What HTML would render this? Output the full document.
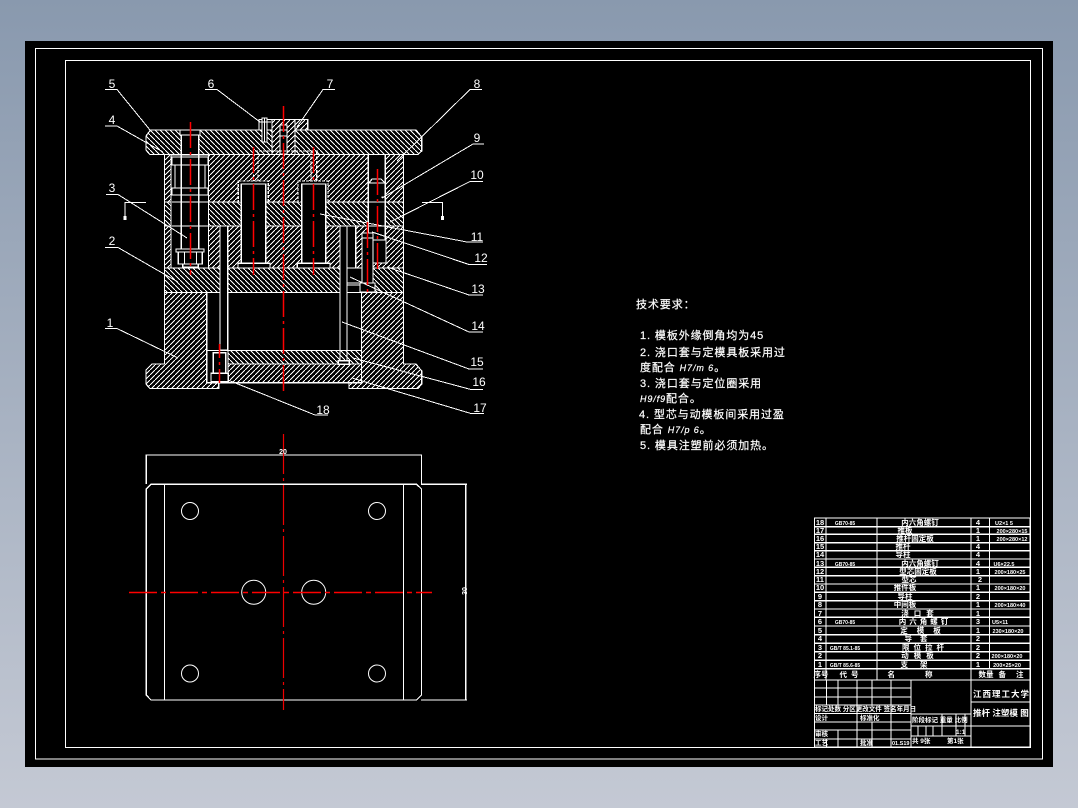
<!DOCTYPE html>
<html><head><meta charset="utf-8"><style>
html,body{margin:0;padding:0;width:1078px;height:808px;overflow:hidden;background:linear-gradient(#8999ae,#c4c9d4)}
svg{position:absolute;left:0;top:0}
.w{fill:none;stroke:#fff;stroke-width:1.2}
.k{fill:#000;stroke:#fff;stroke-width:1.2}
.l{fill:none;stroke:#fff;stroke-width:1}
.r{fill:none;stroke:#f00;stroke-width:1.5;stroke-dasharray:26 4 3 4}
text{fill:#fff;font-family:"Liberation Sans","Noto Sans CJK SC",sans-serif}
.n{font-size:12px;text-anchor:middle}
.t{font-size:11px;letter-spacing:.9px;stroke:#fff;stroke-width:.2px}
.s{font-size:7.5px;font-weight:bold;text-anchor:middle}
.b{font-size:7.5px;font-weight:bold}
</style></head><body>
<svg width="1078" height="808" viewBox="0 0 1078 808" xmlns="http://www.w3.org/2000/svg">
<defs>
<pattern id="a" patternUnits="userSpaceOnUse" width="5" height="5"><path d="M-1 6L6-1" stroke="#fff" stroke-width="1" shape-rendering="crispEdges"/></pattern>
<pattern id="b" patternUnits="userSpaceOnUse" width="5" height="5"><path d="M-1-1L6 6" stroke="#fff" stroke-width="1" shape-rendering="crispEdges"/></pattern>
</defs>
<rect x="25" y="41" width="1028" height="726" fill="#000"/>
<rect x="35.5" y="48.5" width="1007" height="710.5" fill="none" stroke="#fff" stroke-width="1.2" shape-rendering="crispEdges"/>
<rect x="65.5" y="60.5" width="965" height="687" fill="none" stroke="#fff" stroke-width="1.2" shape-rendering="crispEdges"/>

<g shape-rendering="crispEdges">
<path d="M259 130V119.5H307.7V130" fill="url(#a)" stroke="#fff" stroke-width="1.2"/>
<rect x="259" y="119.5" width="13" height="11" fill="#000"/>
<path d="M259 119.5H272M259 119.5V130" class="w"/>
<path d="M150.5 130H416L421.7 137V151L418 154.5H150L146 150V136Z" fill="#000"/>
<path d="M150.5 130H416L421.7 137V151L418 154.5H150L146 150V136Z" class="w" style="fill:url(#b)"/>
<rect x="272" y="119.5" width="23" height="35" fill="#000"/>
<rect x="272" y="119.5" width="23" height="35" fill="url(#a)" stroke="#fff" stroke-width="1.2"/>
<rect x="280" y="125" width="7" height="29" class="k"/>
<path d="M280 130H287M280 136H287" class="l"/>
<rect x="180" y="130" width="20" height="5" class="k"/>
<rect x="181.3" y="135" width="17.4" height="20" class="k"/>
<path d="M262 118H267V142H262Z" fill="#000" stroke="#fff"/>
<path d="M259 122H271M264.5 118V142" class="l"/>

<rect x="164.5" y="154.5" width="239" height="47.5" class="w" style="fill:url(#a)"/>
<rect x="164.5" y="202" width="239" height="24" class="w" style="fill:url(#b)"/>
<rect x="164.5" y="226" width="239" height="42" class="w" style="fill:url(#a)"/>
<rect x="164.5" y="268" width="239" height="24.5" class="w" style="fill:url(#b)"/>

<rect x="171" y="155" width="37.5" height="113" class="k"/>
<path d="M172 202H208M172 226H208" class="w"/>
<rect x="172" y="157" width="36" height="8" class="k"/>
<rect x="172" y="188" width="36" height="7" class="k"/>
<rect x="175" y="165" width="30" height="23" class="k"/>
<path d="M181.3 155V249M198.7 155V249" class="w"/>
<rect x="176" y="249" width="28" height="3" class="k"/>
<rect x="178.3" y="252" width="24" height="12" class="k"/>
<path d="M184.3 252V264M196.7 252V264" class="l"/>
<rect x="182.7" y="264" width="15.6" height="3" class="k"/>

<path d="M255 151H318" class="w" stroke-dasharray="3 1"/>
<path d="M253.5 152V181M258 152V181M311 152V181M316.7 152V181" class="w" stroke-dasharray="3 1.5"/>

<rect x="238.3" y="181" width="30" height="21" class="k" stroke-dasharray="3 1"/>
<rect x="298" y="181" width="30" height="21" class="k" stroke-dasharray="3 1"/>
<rect x="241.3" y="184" width="24.4" height="84" class="k"/>
<rect x="301.7" y="184" width="24" height="84" class="k"/>
<rect x="238" y="263.3" width="32" height="4.7" class="k"/>
<rect x="297.3" y="263.3" width="32.7" height="4.7" class="k"/>

<rect x="368.3" y="154.5" width="17" height="107" class="k"/>
<path d="M369 183L372 179H381L385 183H369Z" class="k"/>
<path d="M368.3 202H385.3M368.3 226H385.3" class="l"/>
<path d="M382 198V197H386" class="l"/>

<rect x="220" y="226" width="7.7" height="124" class="k"/>
<rect x="340" y="226" width="7" height="134.7" class="k"/>
<rect x="347" y="226" width="8.7" height="42" class="k"/>
<rect x="347" y="268" width="15" height="24.5" class="k"/>
<path d="M347 283H362M347 285H362" class="l"/>
<rect x="362" y="233" width="11" height="50" class="k"/>
<path d="M362 238H373" class="l"/>
<rect x="373" y="240" width="13" height="23" class="k"/>
<path d="M373 263H388" class="w"/>
<rect x="360" y="283" width="15" height="9" class="k" stroke-width="2"/>

<rect x="206.7" y="350.5" width="154.8" height="13.5" class="w" style="fill:url(#b)"/>
<rect x="206.7" y="364" width="154.8" height="18.7" class="w" style="fill:url(#a)"/>

<path d="M164.5 292.5H206.7V382.7H218.7V388.5H150L146 384V370L152 364H164.5Z" class="w" style="fill:url(#a)"/>
<path d="M361.5 292.5H403.5V364H416L421.7 371V384L418 388.5H349V382.7H361.5Z" class="w" style="fill:url(#a)"/>

<path d="M220 292.5V350M227.7 292.5V350M340 292.5V361M347 292.5V361" class="w"/>
<rect x="338.3" y="360.7" width="11" height="3.6" class="k"/>
<rect x="206.7" y="350.5" width="21.3" height="32.2" class="k"/>
<rect x="213.3" y="352.7" width="12.4" height="20.6" class="k"/>
<rect x="211" y="373.3" width="17.3" height="8.4" class="k"/>
</g>

<g class="l" shape-rendering="crispEdges">
<path d="M105 89.5H117L150 130"/>
<path d="M105 126H117L163 152"/>
<path d="M205 89.5H217L260 122"/>
<path d="M106 194.5H118L187 238"/>
<path d="M105 247.5H118L178 282"/>
<path d="M105 328.5H117L178 358"/>
<path d="M335 89.5H323L297 127"/>
<path d="M482 89.5H470L397 161"/>
<path d="M484 144H473L382 198"/>
<path d="M483 181.5H470L390 222"/>
<path d="M483 242H467L320 214"/>
<path d="M487 264.5H469L372 232"/>
<path d="M483 295H469L387 267"/>
<path d="M483 332H469L350 277"/>
<path d="M483 369H469L342 322"/>
<path d="M483 389.5H471L353 358"/>
<path d="M484 413.5H471L352 378"/>
<path d="M328 415H315L228 380"/>
<path d="M146 202.5H125V220"/>
<path d="M422 202.5H442.5V220"/>
</g>
<rect x="123.5" y="216" width="3" height="4" fill="#fff"/>
<rect x="441" y="216" width="3" height="4" fill="#fff"/>

<g class="r">
<path d="M190.5 122V275"/>
<path d="M253.5 147V275"/>
<path d="M283.5 106V395"/>
<path d="M313.5 147V275"/>
<path d="M367.5 222V292"/>
<path d="M377.5 169V273"/>
<path d="M219.5 344V385" stroke-dasharray="14 4 3 4"/>
</g>

<g>
<text class="n" x="112" y="88">5</text><text class="n" x="112" y="124">4</text><text class="n" x="211" y="88">6</text>
<text class="n" x="112" y="192">3</text><text class="n" x="112" y="245">2</text><text class="n" x="110" y="327">1</text>
<text class="n" x="330" y="88">7</text><text class="n" x="477" y="88">8</text><text class="n" x="477" y="142">9</text>
<text class="n" x="477" y="179">10</text><text class="n" x="477" y="241">11</text><text class="n" x="481" y="262">12</text>
<text class="n" x="478" y="293">13</text><text class="n" x="478" y="330">14</text><text class="n" x="477" y="366">15</text>
<text class="n" x="479" y="386">16</text><text class="n" x="480" y="412">17</text><text class="n" x="323" y="414">18</text>
</g>

<g shape-rendering="crispEdges" class="w">
<path d="M151 484.3H416.5L421.5 489V695L416.5 700H151L146.3 695V489Z"/>
<path d="M164.5 484.3V700M403.5 484.3V700"/>
<path d="M146.3 484V455H421.5V484M421 484.3H467M421 700H467M465.7 484.3V700"/>
</g>
<g fill="none" stroke="#fff" stroke-width="1">
<circle cx="190" cy="511" r="8.5"/><circle cx="377" cy="511" r="8.5"/>
<circle cx="190" cy="673.5" r="8.5"/><circle cx="377" cy="673.5" r="8.5"/>
<circle cx="253.7" cy="592.3" r="12"/><circle cx="313.7" cy="592.3" r="12"/>
</g>
<path d="M283.5 434V710" fill="none" stroke="#e00" stroke-width="1.2" stroke-dasharray="40 4 3 4"/>
<path d="M129 592.5H432" fill="none" stroke="#f00" stroke-width="1.5" stroke-dasharray="28 4 5 4"/>
<text x="283" y="454" style="font-size:7px;font-weight:bold" text-anchor="middle">20</text>
<text transform="translate(467,591) rotate(-90)" style="font-size:7px;font-weight:bold" text-anchor="middle">30</text>

<text class="t" x="636" y="308">技术要求：</text>
<text class="t" x="640" y="339">1. 模板外缘倒角均为45</text>
<text class="t" x="640" y="356">2. 浇口套与定模具板采用过</text>
<text class="t" x="640" y="371">度配合 <tspan font-style="italic" font-size="9">H7/m 6</tspan>。</text>
<text class="t" x="640" y="387">3. 浇口套与定位圈采用</text>
<text class="t" x="640" y="402"><tspan font-style="italic" font-size="9">H9/f9</tspan>配合。</text>
<text class="t" x="639" y="418">4. 型芯与动模板间采用过盈</text>
<text class="t" x="640" y="433">配合 <tspan font-style="italic" font-size="9">H7/p 6</tspan>。</text>
<text class="t" x="640" y="449">5. 模具注塑前必须加热。</text>

<g class="w" shape-rendering="crispEdges">
<rect x="814.5" y="518" width="215.5" height="229"/>
<path d="M814.5 526.7H1030M814.5 534.3H1030M814.5 542.7H1030M814.5 550.7H1030M814.5 559H1030M814.5 567.3H1030M814.5 575.7H1030M814.5 584H1030M814.5 592.3H1030M814.5 600.7H1030M814.5 609H1030M814.5 617.3H1030M814.5 626H1030M814.5 634.7H1030M814.5 643.3H1030M814.5 651.7H1030M814.5 660.3H1030M814.5 668.7H1030M814.5 680H1030"/>
<path d="M826 518V680M877 518V680M971 518V747M989.5 518V668.7"/>
<path d="M814.5 688H911M814.5 697H911M814.5 705H911M814.5 713.5H911M814.5 722H911M814.5 730H911M814.5 739H911"/>
<path d="M826.5 680V705M838 680V705M857 680V705M872 680V705M891 680V747M911 680V747"/>
<path d="M826.5 739V747M838 730V747M857 705V747M872 722V747M891 730V747"/>
<path d="M911 714H971M911 726H971M911 736H971M971 702H1030M971 726H1030"/>
<path d="M918 726V736M926 726V736M933 726V736M942 714V736M956 714V736M965 714V736"/>
</g>
<g class="s">
<text x="820" y="525">18</text><text x="820" y="533">17</text><text x="820" y="541">16</text><text x="820" y="549">15</text><text x="820" y="557">14</text><text x="820" y="566">13</text><text x="820" y="574">12</text><text x="820" y="582">11</text><text x="820" y="590">10</text><text x="820" y="599">9</text><text x="820" y="607">8</text><text x="820" y="616">7</text><text x="820" y="624">6</text><text x="820" y="633">5</text><text x="820" y="641">4</text><text x="820" y="650">3</text><text x="820" y="658">2</text><text x="820" y="667">1</text>
<text x="845" y="525" style="font-size:5px">GB70-85</text><text x="845" y="566" style="font-size:5px">GB70-85</text><text x="845" y="624" style="font-size:5px">GB70-85</text>
<text x="845" y="650" style="font-size:5px">GB/T 85.1-85</text><text x="845" y="667" style="font-size:5px">GB/T 85.6-85</text>
<text x="920" y="525">内六角螺钉</text><text x="905" y="533">推板</text><text x="915" y="541">推杆固定板</text><text x="903" y="549">推杆</text><text x="903" y="557">导柱</text>
<text x="920" y="566">内六角螺钉</text><text x="918" y="574">型芯固定板</text><text x="909" y="582">型芯</text><text x="905" y="590">推件板</text><text x="905" y="599">导柱</text><text x="905" y="607">中间板</text>
<text x="920" y="616" style="letter-spacing:5px">浇口套</text><text x="925" y="624" style="letter-spacing:3px">内六角螺钉</text><text x="925" y="633" style="letter-spacing:9px">定模板</text>
<text x="920" y="641" style="letter-spacing:8px">导套</text><text x="925" y="650" style="letter-spacing:4px">限位拉杆</text><text x="920" y="658" style="letter-spacing:5px">动模板</text><text x="920" y="667" style="letter-spacing:12px">支架</text>
<text x="978" y="525">4</text><text x="978" y="533">1</text><text x="978" y="541">1</text><text x="978" y="549">4</text><text x="978" y="557">4</text><text x="978" y="566">4</text><text x="978" y="574">1</text><text x="980" y="582">2</text><text x="978" y="590">1</text><text x="978" y="599">2</text><text x="978" y="607">1</text><text x="978" y="616">1</text><text x="978" y="624">3</text><text x="978" y="633">1</text><text x="978" y="641">2</text><text x="978" y="650">2</text><text x="978" y="658">2</text><text x="978" y="667">1</text>
<g style="font-size:5.5px">
<text x="1004" y="525">U2×1 5</text><text x="1012" y="533">200×280×15</text><text x="1012" y="541">200×280×12</text><text x="1004" y="566">U6×22.5</text><text x="1010" y="574">200×180×25</text><text x="1010" y="590">200×180×20</text><text x="1010" y="607">200×180×40</text><text x="1000" y="624">U5×11</text><text x="1008" y="633">230×180×20</text><text x="1007" y="658">200×180×20</text><text x="1007" y="667">200×25×20</text>
</g>
<text x="821" y="677">序号</text><text x="851" y="677" style="letter-spacing:4px">代号</text><text x="925" y="677" style="letter-spacing:30px">名称</text><text x="986" y="677">数量</text><text x="1016" y="677" style="letter-spacing:10px">备注</text>
</g>
<g class="b">
<text x="973" y="697" style="font-size:8.5px;letter-spacing:1px">江西理工大学</text>
<text x="973" y="716" style="font-size:8.5px">推杆 注塑模 图</text>
<text x="815" y="711" style="font-size:6.5px">标记处数 分区更改文件 签名年月日</text>
<text x="815" y="720" style="font-size:6.5px">设计</text><text x="860" y="720" style="font-size:6.5px">标准化</text>
<text x="912" y="722" style="font-size:6.5px">阶段标记 重量 比例</text>
<text x="815" y="736" style="font-size:6.5px">审核</text><text x="815" y="745" style="font-size:6.5px">工艺</text><text x="860" y="745" style="font-size:6.5px">批准</text>
<text x="892" y="745" style="font-size:5.5px">01.S19</text><text x="912" y="743" style="font-size:6.5px">共 9张</text><text x="947" y="743" style="font-size:6.5px">第1张</text><text x="956" y="734" style="font-size:6.5px">1:1</text>
</g>
</svg>
</body></html>
